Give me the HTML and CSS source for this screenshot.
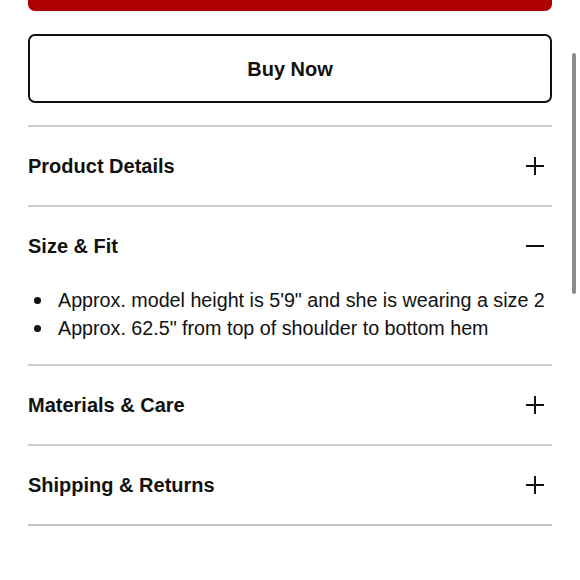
FILE: index.html
```html
<!DOCTYPE html>
<html lang="en">

<head>
    <meta charset="utf-8">
    <meta name="viewport" content="width=device-width, initial-scale=1.0">
    <title>Product</title>

    <link rel="stylesheet" href="styles.css">
</head>

<body>
    <main class="produkt">
        <button class="knap knap-roed" aria-label="Add to Bag"></button>
        <button class="knap knap-kontur">Buy Now</button>

        <section class="accordion">
            <div class="punkt">
                <div class="punkt-top">
                    <h2>Product Details</h2>
                    <span class="ikon plus"></span>
                </div>
            </div>
            <div class="punkt aaben">
                <div class="punkt-top">
                    <h2>Size &amp; Fit</h2>
                    <span class="ikon"></span>
                </div>
                <ul class="punkt-indhold">
                    <li>Approx. model height is 5'9" and she is wearing a size 2</li>
                    <li>Approx. 62.5" from top of shoulder to bottom hem</li>
                </ul>
            </div>
            <div class="punkt">
                <div class="punkt-top">
                    <h2>Materials &amp; Care</h2>
                    <span class="ikon plus"></span>
                </div>
            </div>
            <div class="punkt sidste">
                <div class="punkt-top">
                    <h2>Shipping &amp; Returns</h2>
                    <span class="ikon plus"></span>
                </div>
            </div>
        </section>
    </main>

    <div class="scrollbar"></div>
</body>

</html>
```

FILE: styles.css
```css
body {
    margin: 0;
    background: #fff;
    color: #111;
    font-family: 'Liberation Sans', Arial, sans-serif;
    overflow: hidden;
}

.produkt {
    display: flex;
    flex-direction: column;
    padding: 0 28px;
}

.knap {
    display: block;
    width: 100%;
    box-sizing: border-box;
    border-radius: 7px;
    font-family: inherit;
    font-size: 20px;
    font-weight: bold;
}

.knap-roed {
    height: 56px;
    margin-top: -45px;
    background: #ad0000;
    border: none;
}

.knap-kontur {
    height: 69px;
    margin-top: 23px;
    padding-top: 2px;
    background: #fff;
    border: 2.5px solid #111;
    color: #111;
}

.accordion {
    margin-top: 22px;
}

.punkt {
    border-top: 2px solid #cdcdcd;
}

.punkt.sidste {
    border-bottom: 2px solid #c4c4c4;
}

.punkt-top {
    display: flex;
    align-items: center;
    justify-content: space-between;
    height: 78px;
}

.punkt-top h2 {
    margin: 0;
    font-size: 20px;
    font-weight: bold;
}

.ikon {
    position: relative;
    width: 18px;
    height: 18px;
    margin-right: 8px;
}

.ikon::before,
.ikon::after {
    content: "";
    position: absolute;
    background: #111;
}

.ikon::before {
    left: 0;
    right: 0;
    top: 8px;
    height: 1.6px;
}

.ikon.plus::after {
    top: 0;
    bottom: 0;
    left: 8.2px;
    width: 1.6px;
}

.punkt-indhold {
    margin: 0;
    padding: 1px 0 22px 30px;
    font-size: 19.7px;
    line-height: 28px;
    list-style: none;
}

.punkt-indhold li::before {
    content: "";
    display: inline-block;
    width: 7px;
    height: 7px;
    margin: 0 17px 3px -24px;
    border-radius: 50%;
    background: #111;
    vertical-align: middle;
}

.scrollbar {
    position: fixed;
    top: 53px;
    left: 572px;
    width: 3.5px;
    height: 241px;
    border-radius: 2px;
    background: #8b8b8b;
}
```
